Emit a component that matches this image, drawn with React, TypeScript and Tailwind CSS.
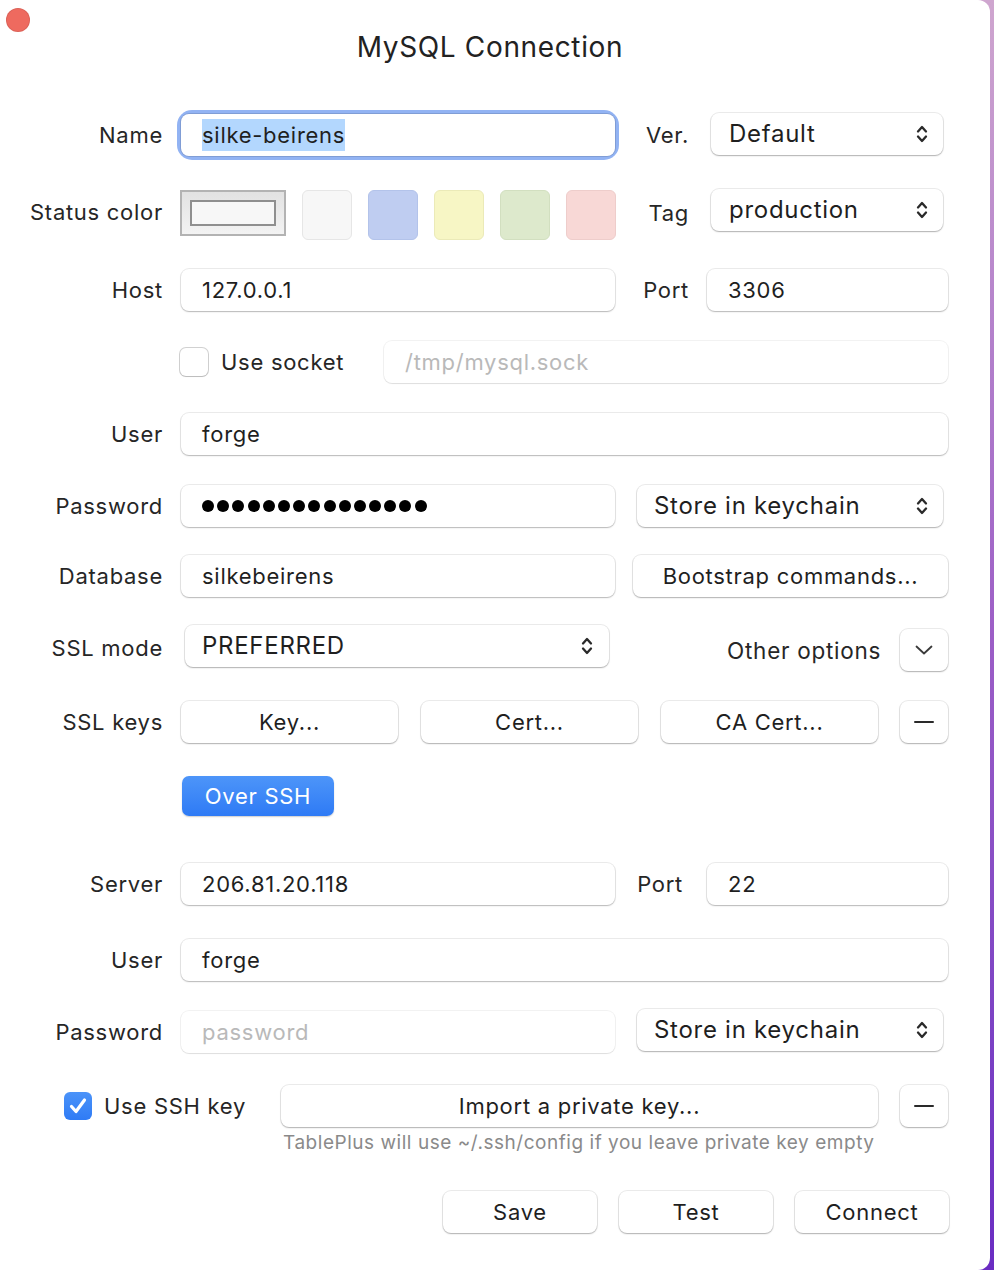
import React from "react";

const field =
  "flex h-[42px] items-center rounded-[8px] bg-white px-[21px] text-[22px] text-[#1f1f1f] shadow-[0_0_0_1px_rgba(0,0,0,0.08),0_1px_1.5px_rgba(0,0,0,0.22)]";
const fieldOff =
  "flex h-[42px] items-center rounded-[8px] bg-white px-[21px] text-[22px] text-[#b9b9b9] shadow-[0_0_0_1px_rgba(0,0,0,0.05),0_1px_1px_rgba(0,0,0,0.08)]";
const button =
  "flex h-[42px] items-center justify-center rounded-[8px] bg-white text-[22px] text-[#1f1f1f] shadow-[0_0_0_1px_rgba(0,0,0,0.08),0_1px_1.5px_rgba(0,0,0,0.25)]";
const popup =
  "flex h-[42px] items-center justify-between rounded-[8px] bg-white text-[24px] text-[#1f1f1f] shadow-[0_0_0_1px_rgba(0,0,0,0.08),0_1px_1.5px_rgba(0,0,0,0.25)]";
const label = "w-[163px] shrink-0 text-right text-[22px] text-[#262626]";

function UpDown() {
  return (
    <svg width="12" height="22" viewBox="0 0 12 22" fill="none" stroke="#2a2a2a" strokeWidth="2.3" strokeLinecap="round" strokeLinejoin="round">
      <path d="M2 8.5 L6 4 L10 8.5" />
      <path d="M2 13.5 L6 18 L10 13.5" />
    </svg>
  );
}

function Minus() {
  return (
    <svg width="20" height="4" viewBox="0 0 20 4">
      <line x1="1" y1="2" x2="19" y2="2" stroke="#2a2a2a" strokeWidth="2" strokeLinecap="round" />
    </svg>
  );
}

function Select({ value, className }: { value: string; className: string }) {
  return (
    <div className={`${popup} ${className}`}>
      <span>{value}</span>
      <UpDown />
    </div>
  );
}

function Checkbox({ checked }: { checked?: boolean }) {
  if (checked) {
    return (
      <div className="flex h-[28px] w-[28px] shrink-0 items-center justify-center rounded-[6px] bg-gradient-to-b from-[#4b93f9] to-[#2f7bf5]">
        <svg width="28" height="28" viewBox="0 0 28 28" fill="none" stroke="white" strokeWidth="3.2" strokeLinecap="round" strokeLinejoin="round">
          <path d="M7.5 14.5 L12 19.5 L20.5 8" />
        </svg>
      </div>
    );
  }
  return (
    <div className="h-[28px] w-[28px] shrink-0 rounded-[6px] bg-white shadow-[0_0_0_1px_rgba(0,0,0,0.18),0_1px_1px_rgba(0,0,0,0.1)]" />
  );
}

function Dots({ count }: { count: number }) {
  return (
    <div className="flex gap-[3.2px]">
      {Array.from({ length: count }).map((_, i) => (
        <span key={i} className="h-[12px] w-[12px] rounded-full bg-black" />
      ))}
    </div>
  );
}

export default function App() {
  return (
    <div className="h-[1270px] w-[994px] bg-gradient-to-b from-[#cfa6cf] via-[#9c5ec6] to-[#6a2cc2] font-['Inter',sans-serif] tracking-[0.045em]">
      <div className="h-[1270px] w-[990px] overflow-hidden rounded-tr-[12px] rounded-br-[12px] bg-white">
        {/* Title bar */}
        <div className="relative h-[66px] pt-[28px]">
          <span className="absolute left-[6px] top-[8px] h-[24px] w-[24px] rounded-full bg-[#ee6a5f] shadow-[inset_0_0_0_1px_rgba(0,0,0,0.08)]" />
          <div className="pr-[10px] text-center text-[28px] leading-[38px] tracking-[0.023em] text-[#222]">MySQL Connection</div>
        </div>

        {/* Name */}
        <div className="mt-[48px] flex h-[42px] items-center">
          <div className={label}>Name</div>
          <div className="ml-[18px] flex w-[767px] items-center">
            <div className="w-[434px] rounded-[11px] shadow-[0_0_0_4px_#92b3f3]">
              <div className={`${field} shadow-[0_0_0_1px_rgba(0,0,0,0.12)]`}>
                <span className="bg-[#b3d7fe] py-[3px] leading-[26px]">silke-beirens</span>
              </div>
            </div>
            <div className="w-[74px] text-right text-[22px] text-[#262626]">Ver.</div>
            <Select value="Default" className="ml-[22px] -mt-[2px] w-[232px] pl-[18px] pr-[15px]" />
          </div>
        </div>

        {/* Status color */}
        <div className="mt-[34px] flex h-[50px] items-start">
          <div className={`${label} mt-[6px]`}>Status color</div>
          <div className="ml-[17px] flex w-[768px] items-start">
            <div className="flex h-[46px] w-[106px] items-center justify-center border-2 border-[#b3b3b3] bg-gradient-to-b from-[#e2e2e2] to-[#f3f3f3]">
              <div className="h-[26px] w-[86px] border-2 border-[#8f8f8f] bg-[#f7f7f7]" />
            </div>
            <div className="ml-[16px] h-[50px] w-[50px] rounded-[6px] border border-[#e6e6e6] bg-[#f7f7f7]" />
            <div className="ml-[16px] h-[50px] w-[50px] rounded-[6px] border border-[#b3c3ea] bg-[#bfcdf1]" />
            <div className="ml-[16px] h-[50px] w-[50px] rounded-[6px] border border-[#ebeab8] bg-[#f7f6c5]" />
            <div className="ml-[16px] h-[50px] w-[50px] rounded-[6px] border border-[#d2dfc0] bg-[#dde9cc]" />
            <div className="ml-[16px] h-[50px] w-[50px] rounded-[6px] border border-[#eecdcb] bg-[#f8d8d6]" />
            <div className="mt-[7px] w-[73px] text-right text-[22px] text-[#262626]">Tag</div>
            <Select value="production" className="-mt-[1px] ml-[22px] w-[232px] pl-[18px] pr-[15px]" />
          </div>
        </div>

        {/* Host */}
        <div className="mt-[29px] flex h-[42px] items-center">
          <div className={label}>Host</div>
          <div className="ml-[18px] flex w-[767px] items-center">
            <div className={`${field} w-[434px]`}>127.0.0.1</div>
            <div className="mr-[18px] flex-1 text-right text-[22px] text-[#262626]">Port</div>
            <div className={`${field} w-[241px]`}>3306</div>
          </div>
        </div>

        {/* Socket */}
        <div className="mt-[30px] flex h-[42px] items-center">
          <div className="ml-[180px] flex w-[768px] items-center">
            <Checkbox />
            <span className="ml-[13px] text-[22px] text-[#262626]">Use socket</span>
            <div className={`${fieldOff} ml-auto w-[564px]`}>/tmp/mysql.sock</div>
          </div>
        </div>

        {/* User */}
        <div className="mt-[30px] flex h-[42px] items-center">
          <div className={label}>User</div>
          <div className={`${field} ml-[18px] w-[767px]`}>forge</div>
        </div>

        {/* Password */}
        <div className="mt-[30px] flex h-[42px] items-center">
          <div className={label}>Password</div>
          <div className="ml-[18px] flex w-[767px] items-center">
            <div className={`${field} w-[434px]`}>
              <Dots count={15} />
            </div>
            <Select value="Store in keychain" className="ml-auto mr-[5px] w-[306px] pl-[17px] pr-[15px]" />
          </div>
        </div>

        {/* Database */}
        <div className="mt-[28px] flex h-[42px] items-center">
          <div className={label}>Database</div>
          <div className="ml-[18px] flex w-[767px] items-center">
            <div className={`${field} w-[434px]`}>silkebeirens</div>
            <div className={`${button} ml-auto w-[315px] text-[22.5px]`}>Bootstrap commands...</div>
          </div>
        </div>

        {/* SSL mode */}
        <div className="mt-[28px] flex h-[46px] items-start">
          <div className={`${label} mt-[7px]`}>SSL mode</div>
          <div className="ml-[22px] flex w-[763px] items-start">
            <Select value="PREFERRED" className="w-[424px] pl-[17px] pr-[16px]" />
            <div className="mr-[19px] mt-[9px] flex-1 text-right text-[22.5px] text-[#262626]">Other options</div>
            <div className={`${button} mt-[4px] w-[48px]`}>
              <svg width="18" height="10" viewBox="0 0 18 10" fill="none" stroke="#3a3a3a" strokeWidth="1.8" strokeLinecap="round" strokeLinejoin="round">
                <path d="M1.5 1.5 L9 8.5 L16.5 1.5" />
              </svg>
            </div>
          </div>
        </div>

        {/* SSL keys */}
        <div className="mt-[30px] flex h-[42px] items-center">
          <div className={label}>SSL keys</div>
          <div className="ml-[18px] flex w-[767px] items-center">
            <div className={`${button} w-[217px]`}>Key...</div>
            <div className={`${button} ml-[23px] w-[217px]`}>Cert...</div>
            <div className={`${button} ml-[23px] w-[217px]`}>CA Cert...</div>
            <div className={`${button} ml-[22px] w-[48px]`}>
              <Minus />
            </div>
          </div>
        </div>

        {/* Over SSH */}
        <div className="mt-[33px] flex h-[40px] items-center">
          <div className="ml-[182px] flex h-[40px] w-[152px] items-center justify-center rounded-[7px] bg-gradient-to-b from-[#4d95f9] to-[#2e7af5] text-[22px] text-white shadow-[0_1px_1.5px_rgba(0,0,0,0.2)]">
            Over SSH
          </div>
        </div>

        {/* Server */}
        <div className="mt-[47px] flex h-[42px] items-center">
          <div className={label}>Server</div>
          <div className="ml-[18px] flex w-[767px] items-center">
            <div className={`${field} w-[434px]`}>206.81.20.118</div>
            <div className="mr-[24px] flex-1 text-right text-[22px] text-[#262626]">Port</div>
            <div className={`${field} w-[241px]`}>22</div>
          </div>
        </div>

        {/* SSH user */}
        <div className="mt-[34px] flex h-[42px] items-center">
          <div className={label}>User</div>
          <div className={`${field} ml-[18px] w-[767px]`}>forge</div>
        </div>

        {/* SSH password */}
        <div className="mt-[30px] flex h-[42px] items-center">
          <div className={label}>Password</div>
          <div className="ml-[18px] flex w-[767px] items-center">
            <div className={`${fieldOff} w-[434px]`}>password</div>
            <Select value="Store in keychain" className="-mt-[4px] ml-auto mr-[5px] w-[306px] pl-[17px] pr-[15px]" />
          </div>
        </div>

        {/* SSH key */}
        <div className="mt-[32px] flex h-[42px] items-center">
          <div className="ml-[64px] flex items-center">
            <Checkbox checked />
            <span className="ml-[12px] text-[22px] text-[#262626]">Use SSH key</span>
          </div>
          <div className={`${button} ml-auto w-[597px]`}>Import a private key...</div>
          <div className={`${button} ml-[22px] mr-[42px] w-[48px]`}>
            <Minus />
          </div>
        </div>
        <div className="ml-[283px] mt-[4px] text-[19px] leading-[24px] tracking-[0.028em] text-[#8a8a8a]">
          TablePlus will use ~/.ssh/config if you leave private key empty
        </div>

        {/* Actions */}
        <div className="mt-[36px] flex h-[42px] items-center justify-end pr-[41px]">
          <div className={`${button} w-[154px]`}>Save</div>
          <div className={`${button} ml-[22px] w-[154px]`}>Test</div>
          <div className={`${button} ml-[22px] w-[154px]`}>Connect</div>
        </div>
      </div>
    </div>
  );
}
